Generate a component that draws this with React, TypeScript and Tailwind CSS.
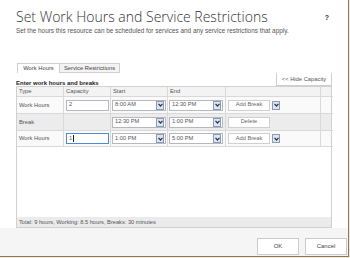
import React from "react";

const font = { fontFamily: '"Liberation Sans", Arial, sans-serif' };

function Arrow() {
  return (
    <div className="w-[8px] h-[9px] border border-[#8a9bb5] bg-[#dde5f0] flex items-center justify-center shrink-0">
      <svg width="5" height="4" viewBox="0 0 5 4">
        <path d="M0.5 0.8 L2.5 3 L4.5 0.8" stroke="#2a3346" strokeWidth="1.2" fill="none" />
      </svg>
    </div>
  );
}

function Select({ value }: { value: string }) {
  return (
    <div className="ml-[1px] w-[54px] h-[11px] border border-[#b5b8bf] bg-white flex items-center justify-between pl-[2px] pr-[1px]">
      <span className="text-[5.7px] text-[#555] leading-none">{value}</span>
      <Arrow />
    </div>
  );
}

function Cap({ value, focused }: { value: string; focused?: boolean }) {
  return (
    <div
      className={
        focused
          ? "ml-[2px] w-[43px] h-[11px] border border-[#4d8ad8] bg-white flex items-center pl-[2px]"
          : "ml-[2px] w-[43px] h-[11px] border border-[#b5b8bf] bg-white flex items-center pl-[2px]"
      }
    >
      <span className="text-[5.7px] text-[#555] leading-none">{value}</span>
      {focused && <span className="w-px h-[7px] bg-[#222] ml-[1px]" />}
    </div>
  );
}

function Btn({ label }: { label: string }) {
  return (
    <div className="ml-[2px] w-[42px] h-[11px] border border-[#cfcfcf] bg-white flex items-center justify-center">
      <span className="text-[5.7px] text-[#666] leading-none">{label}</span>
    </div>
  );
}

function Row({
  bg,
  h,
  type,
  cap,
  start,
  end,
  action,
}: {
  bg: string;
  h: string;
  type: string;
  cap: React.ReactNode;
  start: string;
  end: string;
  action: React.ReactNode;
}) {
  const cell = "border-r border-b border-[#d9d9d9] flex items-center";
  return (
    <div className={`grid grid-cols-[47px_47px_57px_58px_95px_12px] ${h} ${bg}`}>
      <div className={`${cell} pl-[2px] text-[5.8px] text-[#555]`}>{type}</div>
      <div className={cell}>{cap}</div>
      <div className={cell}>
        <Select value={start} />
      </div>
      <div className={cell}>
        <Select value={end} />
      </div>
      <div className={cell}>{action}</div>
      <div className="border-b border-[#d9d9d9]" />
    </div>
  );
}

export default function App() {
  return (
    <div className="w-[350px] h-[258px] bg-[#ebe8e1]" style={font}>
      <div className="w-[349px] h-[257px] bg-white border-r border-b border-[#8c7955] flex flex-col">
        {/* header */}
        <div className="px-[16px] pt-[8px] flex justify-between">
          <div>
            <div
              className="text-[14px] leading-[18px] text-[#333] font-light"
              style={{ fontFamily: '"Open Sans", sans-serif' }}
            >
              Set Work Hours and Service Restrictions
            </div>
            <div className="text-[6.4px] leading-[8px] text-[#555] mt-[1px]">
              Set the hours this resource can be scheduled for services and any service restrictions that apply.
            </div>
          </div>
          <div className="text-[7px] text-[#333] pt-[5px] pr-[3px] font-bold">?</div>
        </div>

        {/* tabs */}
        <div className="mt-[28px] pl-[17px] flex h-[10px] text-[5.8px] text-[#444]">
          <div className="w-[42px] border-l border-t border-[#cfcfcf] flex items-center justify-center bg-white">
            Work Hours
          </div>
          <div className="w-[61px] border border-[#cfcfcf] flex items-center justify-center bg-[#f3f3f3]">
            Service Restrictions
          </div>
        </div>

        {/* panel */}
        <div className="ml-[16px] w-[316px] flex flex-col flex-1">
          <div className="h-[13px] flex justify-between items-start">
            <div className="text-[6px] font-bold text-[#222] pt-[7px] leading-none">Enter work hours and breaks</div>
            <div className="h-[13px] w-[56px] border-x border-b border-[#cfcfcf] flex items-center justify-center text-[5.8px] text-[#555]">
              &lt;&lt; Hide Capacity
            </div>
          </div>
          <div className="flex-1 border border-[#d0d0d0] flex flex-col">
            <div className="grid grid-cols-[47px_47px_57px_58px_95px_12px] h-[10px] bg-[#f3f3f3] text-[5.8px] text-[#555]">
              <div className="border-r border-b border-[#d9d9d9] pl-[2px] flex items-center">Type</div>
              <div className="border-r border-b border-[#d9d9d9] pl-[2px] flex items-center">Capacity</div>
              <div className="border-r border-b border-[#d9d9d9] pl-[2px] flex items-center">Start</div>
              <div className="border-r border-b border-[#d9d9d9] pl-[2px] flex items-center">End</div>
              <div className="border-r border-b border-[#d9d9d9]" />
              <div className="border-b border-[#d9d9d9]" />
            </div>
            <Row
              bg="bg-[#fafafa]"
              h="h-[17px]"
              type="Work Hours"
              cap={<Cap value="2" />}
              start="8:00 AM"
              end="12:30 PM"
              action={
                <div className="flex items-center">
                  <Btn label="Add Break" />
                  <div className="ml-[2px]">
                    <Arrow />
                  </div>
                </div>
              }
            />
            <Row
              bg="bg-[#ececec]"
              h="h-[17px]"
              type="Break"
              cap={null}
              start="12:30 PM"
              end="1:00 PM"
              action={<Btn label="Delete" />}
            />
            <Row
              bg="bg-[#fafafa]"
              h="h-[16px]"
              type="Work Hours"
              cap={<Cap value="1" focused />}
              start="1:00 PM"
              end="5:00 PM"
              action={
                <div className="flex items-center">
                  <Btn label="Add Break" />
                  <div className="ml-[2px]">
                    <Arrow />
                  </div>
                </div>
              }
            />
            <div className="flex-1" />
            <div className="h-[10px] bg-[#ebebeb] flex items-center pl-[2px] text-[5.7px] text-[#555]">
              Total: 9 hours, Working: 8.5 hours, Breaks: 30 minutes
            </div>
          </div>
        </div>

        {/* footer */}
        <div className="h-[28px] bg-[#f5f5f5] flex items-end justify-end gap-[6px] pr-[1px] pb-[1px] shrink-0">
          <div className="w-[42px] h-[17px] bg-white border border-[#cccccc] flex items-center justify-center text-[6px] text-[#444]">
            OK
          </div>
          <div className="w-[42px] h-[17px] bg-white border border-[#cccccc] flex items-center justify-center text-[6px] text-[#444]">
            Cancel
          </div>
        </div>
      </div>
    </div>
  );
}
